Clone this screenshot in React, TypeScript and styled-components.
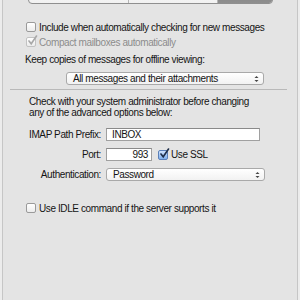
import React from 'react';
import styled, { createGlobalStyle } from 'styled-components';

const GlobalStyle = createGlobalStyle`
  html, body {
    margin: 0;
    padding: 0;
    background: #ececec;
    overflow: hidden;
  }
  body {
    font-family: "Liberation Sans", "DejaVu Sans", sans-serif;
    font-size: 10px;
    letter-spacing: -0.4px;
    color: #141414;
    white-space: nowrap;
  }
`;

const Panel = styled.div`
  margin: 0 2px;
  height: 300px;
  box-sizing: border-box;
  background: #e4e4e4;
  border-left: 1px solid #c6c6c6;
  border-right: 1px solid #c6c6c6;
  padding: 0 10px 0 10px;
  display: flex;
  flex-direction: column;
`;

const Tabs = styled.div`
  display: flex;
  margin: -18px 14px 0 15px;
  height: 20px;
  border: 1px solid #8f8f8f;
  border-radius: 4px;
  overflow: hidden;
  background: linear-gradient(#ffffff, #f1f1f1);
`;

const Tab = styled.div<{ $active?: boolean; $w: number }>`
  width: ${({ $w }) => $w}px;
  flex: ${({ $active }) => ($active ? '1' : 'none')};
  border-right: ${({ $active }) => ($active ? 'none' : '1px solid #b5b5b5')};
  background: ${({ $active }) => ($active ? 'linear-gradient(#7e7e7e, #8e8e8e)' : 'transparent')};
`;

const CheckRow = styled.label<{ $top: number; $disabled?: boolean }>`
  display: flex;
  align-items: center;
  gap: 3px;
  margin: ${({ $top }) => $top}px 0 0 13px;
  height: 10px;
  color: ${({ $disabled }) => ($disabled ? '#8c8c8c' : '#141414')};
`;

const Box = styled.span<{ $disabled?: boolean; $blue?: boolean }>`
  position: relative;
  width: 8px;
  height: 8px;
  border: 1px solid ${({ $disabled, $blue }) => ($disabled ? '#c2c2c2' : $blue ? '#5a7fb8' : '#9a9a9a')};
  border-radius: 2px;
  background: ${({ $blue }) =>
    $blue ? 'linear-gradient(#cfe2fb, #7fb0ee)' : 'linear-gradient(#ffffff, #ececec)'};
  flex: none;
`;

const Mark = styled.svg`
  position: absolute;
  left: 0;
  top: -3px;
`;

const Text = styled.div<{ $top: number; $left: number }>`
  margin: ${({ $top }) => $top}px 0 0 ${({ $left }) => $left}px;
  line-height: 11px;
`;

const Popup = styled.div<{ $width: number }>`
  display: flex;
  align-items: center;
  justify-content: space-between;
  width: ${({ $width }) => $width}px;
  height: 11px;
  box-sizing: content-box;
  border: 1px solid #a9a9a9;
  border-radius: 3px;
  background: linear-gradient(#ffffff, #f2f2f2);
  padding: 0 4px 0 6px;
  color: #141414;
`;

const PopupWrap = styled.div`
  margin: 7px 0 0 53px;
`;

const Arrows = () => (
  <svg width="5" height="8" viewBox="0 0 5 8">
    <path d="M0.5 3 L2.5 1 L4.5 3 Z M0.5 5 L2.5 7 L4.5 5 Z" fill="#444" />
  </svg>
);

const Divider = styled.div`
  height: 1px;
  background: #b9b9b9;
  margin: 4px 0 0 -3px;
`;

const FormGrid = styled.div`
  display: grid;
  grid-template-columns: 88px auto;
  column-gap: 5px;
  row-gap: 7px;
  margin: 10px 0 0 0;
  align-items: center;
`;

const Label = styled.div`
  text-align: right;
`;

const Field = styled.div<{ $width: number; $align?: string }>`
  width: ${({ $width }) => $width}px;
  height: 11px;
  box-sizing: content-box;
  border: 1px solid #a0a0a0;
  border-top-color: #8a8a8a;
  background: #fff;
  padding: 0 3px 0 5px;
  line-height: 11px;
  text-align: ${({ $align }) => $align || 'left'};
`;

const Inline = styled.div`
  display: flex;
  align-items: center;
  gap: 6px;
`;

const SslCheck = styled.div`
  display: flex;
  align-items: center;
  gap: 3px;
`;

const Check = ({ checked, disabled, blue }: { checked?: boolean; disabled?: boolean; blue?: boolean }) => (
  <Box $disabled={disabled} $blue={blue}>
    {checked && (
      <Mark width="11" height="11" viewBox="0 0 11 11">
        <path
          d="M2 6 L4.2 8.8 L9.5 1"
          fill="none"
          stroke={disabled ? '#a8a8a8' : blue ? '#1f2f4a' : '#222'}
          strokeWidth="1.6"
          strokeLinecap="round"
        />
      </Mark>
    )}
  </Box>
);

const App = () => (
  <>
    <GlobalStyle />
    <Panel>
      <Tabs>
        <Tab $w={99} />
        <Tab $w={88} />
        <Tab $w={55} $active />
      </Tabs>
      <CheckRow $top={18}>
        <Check />
        Include when automatically checking for new messages
      </CheckRow>
      <CheckRow $top={5} $disabled>
        <Check checked disabled />
        Compact mailboxes automatically
      </CheckRow>
      <Text $top={7} $left={12}>Keep copies of messages for offline viewing:</Text>
      <PopupWrap>
        <Popup $width={186}>
          All messages and their attachments
          <Arrows />
        </Popup>
      </PopupWrap>
      <Divider />
      <Text $top={6} $left={16}>
        Check with your system administrator before changing
        <br />
        any of the advanced options below:
      </Text>
      <FormGrid>
        <Label>IMAP Path Prefix:</Label>
        <Field $width={144}>INBOX</Field>
        <Label>Port:</Label>
        <Inline>
          <Field $width={36} $align="right">993</Field>
          <SslCheck>
            <Check checked blue />
            Use SSL
          </SslCheck>
        </Inline>
        <Label>Authentication:</Label>
        <Popup $width={147}>
          Password
          <Arrows />
        </Popup>
      </FormGrid>
      <CheckRow $top={22}>
        <Check />
        Use IDLE command if the server supports it
      </CheckRow>
    </Panel>
  </>
);

export default App;
